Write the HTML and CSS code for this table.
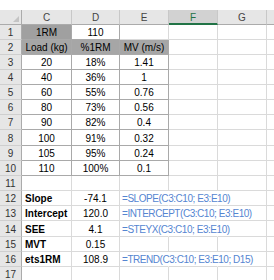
FILE: index.html
```html
<!DOCTYPE html>
<html>
<head>
<meta charset="utf-8">
<link rel="stylesheet" href="styles.css">
</head>
<body>
<div class="sheet">
  <div class="c h corner"><span class="tri"></span></div>
  <div class="c h">C</div><div class="c h">D</div><div class="c h">E</div><div class="c h sel">F</div><div class="c h">G</div><div class="c h last"></div>

  <div class="c r">1</div><div class="c t dark">1RM</div><div class="c t">110</div><div class="c"></div><div class="c"></div><div class="c"></div><div class="c last"></div>
  <div class="c r">2</div><div class="c t gray">Load (kg)</div><div class="c t gray">%1RM</div><div class="c t gray">MV (m/s)</div><div class="c"></div><div class="c"></div><div class="c last"></div>
  <div class="c r">3</div><div class="c t">20</div><div class="c t">18%</div><div class="c t">1.41</div><div class="c"></div><div class="c"></div><div class="c last"></div>
  <div class="c r">4</div><div class="c t">40</div><div class="c t">36%</div><div class="c t">1</div><div class="c"></div><div class="c"></div><div class="c last"></div>
  <div class="c r">5</div><div class="c t">60</div><div class="c t">55%</div><div class="c t">0.76</div><div class="c"></div><div class="c"></div><div class="c last"></div>
  <div class="c r">6</div><div class="c t">80</div><div class="c t">73%</div><div class="c t">0.56</div><div class="c"></div><div class="c"></div><div class="c last"></div>
  <div class="c r">7</div><div class="c t">90</div><div class="c t">82%</div><div class="c t">0.4</div><div class="c"></div><div class="c"></div><div class="c last"></div>
  <div class="c r">8</div><div class="c t">100</div><div class="c t">91%</div><div class="c t">0.32</div><div class="c"></div><div class="c"></div><div class="c last"></div>
  <div class="c r">9</div><div class="c t">105</div><div class="c t">95%</div><div class="c t">0.24</div><div class="c"></div><div class="c"></div><div class="c last"></div>
  <div class="c r">10</div><div class="c t">110</div><div class="c t">100%</div><div class="c t">0.1</div><div class="c"></div><div class="c"></div><div class="c last"></div>
  <div class="c r">11</div><div class="c"></div><div class="c"></div><div class="c"></div><div class="c"></div><div class="c"></div><div class="c last"></div>

  <div class="c r">12</div><div class="c lbl">Slope</div><div class="c">-74.1</div><div class="c f">=SLOPE(C3:C10; E3:E10)</div><div class="c ov"></div><div class="c ov end"></div><div class="c last"></div>
  <div class="c r">13</div><div class="c lbl">Intercept</div><div class="c">120.0</div><div class="c f">=INTERCEPT(C3:C10; E3:E10)</div><div class="c ov"></div><div class="c ov end"></div><div class="c last"></div>
  <div class="c r">14</div><div class="c lbl">SEE</div><div class="c">4.1</div><div class="c f">=STEYX(C3:C10; E3:E10)</div><div class="c ov"></div><div class="c ov end"></div><div class="c last"></div>
  <div class="c r">15</div><div class="c lbl">MVT</div><div class="c">0.15</div><div class="c"></div><div class="c"></div><div class="c"></div><div class="c last"></div>
  <div class="c r">16</div><div class="c lbl">ets1RM</div><div class="c">108.9</div><div class="c f">=TREND(C3:C10; E3:E10; D15)</div><div class="c ov"></div><div class="c ov end"></div><div class="c last"></div>
  <div class="c r">17</div><div class="c"></div><div class="c"></div><div class="c"></div><div class="c"></div><div class="c"></div><div class="c last"></div>
</div>
</body>
</html>
```
FILE: styles.css
```css
html, body {
  margin: 0;
  padding: 0;
  background: #fff;
}
body {
  font-family: "Liberation Sans", Arial, sans-serif;
  font-size: 10px;
  color: #000;
  overflow: hidden;
}
.sheet {
  display: grid;
  grid-template-columns: 22px 50px 48px 49px 49px 49px 1fr;
  grid-template-rows: 15px repeat(7, 15px) 16px repeat(5, 15px) 16px repeat(3, 15px);
  padding-top: 10px;
  width: 274px;
  overflow: hidden;
}
.c {
  box-sizing: border-box;
  border-right: 1px solid #dadada;
  border-bottom: 1px solid #dadada;
  display: flex;
  align-items: center;
  justify-content: center;
  white-space: nowrap;
  position: relative;
  padding-top: 1px;
}
.h {
  background: #e6e6e6;
  color: #444;
  border-right: 1px solid #c8c8c8;
  border-bottom: 1px solid #ababab;
}
.h.sel {
  background: #d2d2d2;
  color: #217346;
  border-bottom: 2px solid #217346;
}
.corner {
  border-right: 1px solid #ababab;
}
.tri {
  position: absolute;
  right: 2px;
  bottom: 2px;
  width: 0;
  height: 0;
  border-left: 6px solid transparent;
  border-bottom: 6px solid #c4c4c4;
}
.r {
  background: #e6e6e6;
  color: #333;
  border-right: 1px solid #ababab;
  border-bottom: 1px solid #cfcfcf;
}
.t {
  border-right-color: #a9a9a9;
  border-bottom-color: #a9a9a9;
}
.dark {
  background: #a0a0a0;
}
.gray {
  background: #a6a6a6;
}
.lbl {
  justify-content: flex-start;
  padding-left: 3px;
  font-weight: bold;
}
.f {
  justify-content: flex-start;
  padding-left: 2px;
  color: #5585d1;
  letter-spacing: -0.45px;
  border-right-color: transparent;
  overflow: visible;
}
.ov {
  border-right-color: transparent;
}
.ov.end {
  border-right-color: #dadada;
}
.last {
  border-right: none;
}
```
